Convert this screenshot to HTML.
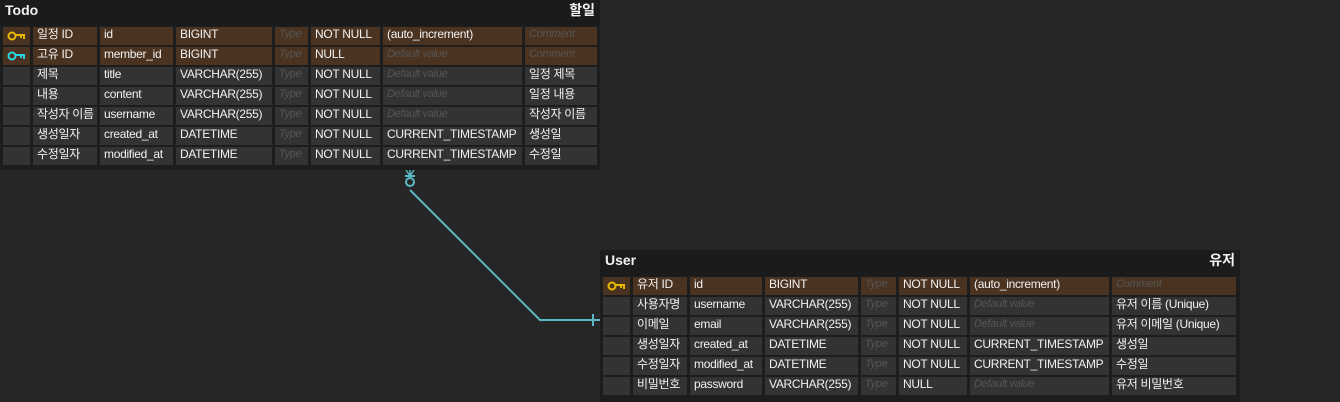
<!DOCTYPE html>
<html><head><meta charset="utf-8"><style>
body{margin:0;width:1340px;height:402px;background:#262626;position:relative;overflow:hidden;font-family:"Liberation Sans","Noto Sans CJK KR",sans-serif;font-size:12px;letter-spacing:-0.3px;color:#f2f2f2}
.t{position:absolute;background:#1d1d1d}
.h{height:26px;line-height:21px;font-weight:bold;font-size:14px;padding:0 5px;display:flex;justify-content:space-between;background:#1b1b1b;letter-spacing:0}
.r{display:flex;gap:3px;height:18px;margin:0 3px 2px 3px}
.r div{background:#333;line-height:15px;padding-left:4px;box-sizing:border-box;white-space:nowrap;overflow:hidden}
.r.pk div{background:#4a3320}
.r div.i{color:#555;font-style:italic;font-size:11px}
.r div.k{display:flex;align-items:center;padding-left:4px}
</style></head><body>
<svg style="position:absolute;left:0;top:0" width="1340" height="402">
<polyline points="410,190 540,320 600,320" fill="none" stroke="#5bb8c4" stroke-width="2"/>
<line x1="593" y1="314" x2="593" y2="326" stroke="#5bb8c4" stroke-width="2"/>
<circle cx="410" cy="182" r="4" fill="none" stroke="#5bb8c4" stroke-width="2"/>
<line x1="405" y1="176" x2="415" y2="176" stroke="#5bb8c4" stroke-width="2"/>
<path d="M406 170 L410 176 L414 170 M410 170 L410 176" stroke="#5bb8c4" stroke-width="1.5" fill="none"/>
</svg>
<div class="t" style="left:0;top:0;width:600px;height:170px">
<div class="h"><span>Todo</span><span>할일</span></div>
<div style="height:1px"></div>
<div class="r pk"><div class="k" style="width:27px"><svg width="18" height="10"><circle cx="5" cy="5" r="3.5" fill="none" stroke="#e6b800" stroke-width="2"/><path d="M8 4H17V8M14 4V7" stroke="#e6b800" stroke-width="2" fill="none"/></svg></div><div style="width:64px">일정 ID</div><div style="width:73px">id</div><div style="width:96px">BIGINT</div><div class="i" style="width:33px">Type</div><div style="width:69px">NOT NULL</div><div style="width:139px">(auto_increment)</div><div class="i" style="width:72px">Comment</div></div>
<div class="r pk"><div class="k" style="width:27px"><svg width="18" height="10"><circle cx="5" cy="5" r="3.5" fill="none" stroke="#2ad4e0" stroke-width="2"/><path d="M8 4H17V8M14 4V7" stroke="#2ad4e0" stroke-width="2" fill="none"/></svg></div><div style="width:64px">고유 ID</div><div style="width:73px">member_id</div><div style="width:96px">BIGINT</div><div class="i" style="width:33px">Type</div><div style="width:69px">NULL</div><div class="i" style="width:139px">Default value</div><div class="i" style="width:72px">Comment</div></div>
<div class="r"><div style="width:27px"></div><div style="width:64px">제목</div><div style="width:73px">title</div><div style="width:96px">VARCHAR(255)</div><div class="i" style="width:33px">Type</div><div style="width:69px">NOT NULL</div><div class="i" style="width:139px">Default value</div><div style="width:72px">일정 제목</div></div>
<div class="r"><div style="width:27px"></div><div style="width:64px">내용</div><div style="width:73px">content</div><div style="width:96px">VARCHAR(255)</div><div class="i" style="width:33px">Type</div><div style="width:69px">NOT NULL</div><div class="i" style="width:139px">Default value</div><div style="width:72px">일정 내용</div></div>
<div class="r"><div style="width:27px"></div><div style="width:64px">작성자 이름</div><div style="width:73px">username</div><div style="width:96px">VARCHAR(255)</div><div class="i" style="width:33px">Type</div><div style="width:69px">NOT NULL</div><div class="i" style="width:139px">Default value</div><div style="width:72px">작성자 이름</div></div>
<div class="r"><div style="width:27px"></div><div style="width:64px">생성일자</div><div style="width:73px">created_at</div><div style="width:96px">DATETIME</div><div class="i" style="width:33px">Type</div><div style="width:69px">NOT NULL</div><div style="width:139px">CURRENT_TIMESTAMP</div><div style="width:72px">생성일</div></div>
<div class="r"><div style="width:27px"></div><div style="width:64px">수정일자</div><div style="width:73px">modified_at</div><div style="width:96px">DATETIME</div><div class="i" style="width:33px">Type</div><div style="width:69px">NOT NULL</div><div style="width:139px">CURRENT_TIMESTAMP</div><div style="width:72px">수정일</div></div>
</div>
<div class="t" style="left:600px;top:250px;width:640px;height:152px">
<div class="h"><span>User</span><span>유저</span></div>
<div style="height:1px"></div>
<div class="r pk"><div class="k" style="width:27px"><svg width="18" height="10"><circle cx="5" cy="5" r="3.5" fill="none" stroke="#e6b800" stroke-width="2"/><path d="M8 4H17V8M14 4V7" stroke="#e6b800" stroke-width="2" fill="none"/></svg></div><div style="width:54px">유저 ID</div><div style="width:72px">id</div><div style="width:93px">BIGINT</div><div class="i" style="width:35px">Type</div><div style="width:68px">NOT NULL</div><div style="width:139px">(auto_increment)</div><div class="i" style="width:124px">Comment</div></div>
<div class="r"><div style="width:27px"></div><div style="width:54px">사용자명</div><div style="width:72px">username</div><div style="width:93px">VARCHAR(255)</div><div class="i" style="width:35px">Type</div><div style="width:68px">NOT NULL</div><div class="i" style="width:139px">Default value</div><div style="width:124px">유저 이름 (Unique)</div></div>
<div class="r"><div style="width:27px"></div><div style="width:54px">이메일</div><div style="width:72px">email</div><div style="width:93px">VARCHAR(255)</div><div class="i" style="width:35px">Type</div><div style="width:68px">NOT NULL</div><div class="i" style="width:139px">Default value</div><div style="width:124px">유저 이메일 (Unique)</div></div>
<div class="r"><div style="width:27px"></div><div style="width:54px">생성일자</div><div style="width:72px">created_at</div><div style="width:93px">DATETIME</div><div class="i" style="width:35px">Type</div><div style="width:68px">NOT NULL</div><div style="width:139px">CURRENT_TIMESTAMP</div><div style="width:124px">생성일</div></div>
<div class="r"><div style="width:27px"></div><div style="width:54px">수정일자</div><div style="width:72px">modified_at</div><div style="width:93px">DATETIME</div><div class="i" style="width:35px">Type</div><div style="width:68px">NOT NULL</div><div style="width:139px">CURRENT_TIMESTAMP</div><div style="width:124px">수정일</div></div>
<div class="r"><div style="width:27px"></div><div style="width:54px">비밀번호</div><div style="width:72px">password</div><div style="width:93px">VARCHAR(255)</div><div class="i" style="width:35px">Type</div><div style="width:68px">NULL</div><div class="i" style="width:139px">Default value</div><div style="width:124px">유저 비밀번호</div></div>
</div>
</body></html>
